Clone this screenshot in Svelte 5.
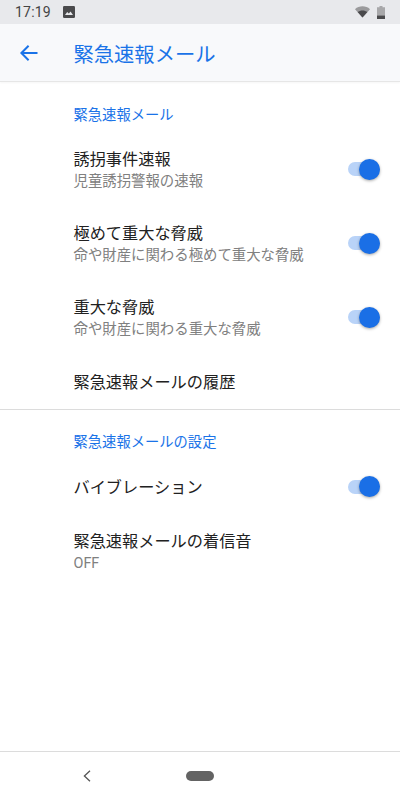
<script>
	const groups = [
		{
			title: '緊急速報メール',
			rows: [
				{ label: '誘拐事件速報', sub: '児童誘拐警報の速報', on: true },
				{ label: '極めて重大な脅威', sub: '命や財産に関わる極めて重大な脅威', on: true },
				{ label: '重大な脅威', sub: '命や財産に関わる重大な脅威', on: true },
				{ label: '緊急速報メールの履歴' }
			]
		},
		{
			title: '緊急速報メールの設定',
			rows: [
				{ label: 'バイブレーション', on: true },
				{ label: '緊急速報メールの着信音', sub: 'OFF' }
			]
		}
	];
</script>

<div class="screen">
	<div class="status">
		<span class="time">17:19</span>
		<svg class="photo" width="12" height="12" viewBox="0 0 12 12">
			<rect width="12" height="12" rx="1.2" fill="#4a4a4c" />
			<path d="M2 9 L4.2 6 L5.8 7.6 L7.6 5.4 L10 9 Z" fill="#e8e9ec" />
		</svg>
		<span class="spacer"></span>
		<svg class="wifi" width="15" height="12" viewBox="0 0 15 12">
			<path d="M0 3.2 C4 -0.6 11 -0.6 15 3.2 L7.5 11.6 Z" fill="#9a9a9c" />
			<path d="M2.6 6.1 C5.3 3.9 9.7 3.9 12.4 6.1 L7.5 11.6 Z" fill="#4a4a4c" />
		</svg>
		<svg class="battery" width="8" height="13" viewBox="0 0 8 13">
			<path d="M2.5 0 H5.5 V1.2 H8 V13 H0 V1.2 H2.5 Z" fill="#a8a8aa" />
			<rect y="9.6" width="8" height="3.4" fill="#4a4a4c" />
		</svg>
	</div>

	<header class="appbar">
		<svg class="back" width="20" height="20" viewBox="0 0 20 20">
			<path d="M18.5 10 H2.5 M9.6 2.8 L2.4 10 L9.6 17.2" fill="none" stroke="#1a73e8" stroke-width="2" />
		</svg>
		<h1>緊急速報メール</h1>
	</header>

	<main class="list">
		{#each groups as group, i}
			<section class:divided={i > 0}>
				<h2>{group.title}</h2>
				{#each group.rows as row}
					<div class="row" class:single={!row.sub}>
						<div class="text">
							<div class="label">{row.label}</div>
							{#if row.sub}
								<div class="sub">{row.sub}</div>
							{/if}
						</div>
						{#if row.on}
							<div class="switch"><span class="thumb"></span></div>
						{/if}
					</div>
				{/each}
			</section>
		{/each}
	</main>

	<nav class="navbar">
		<svg class="navback" width="8" height="12" viewBox="0 0 8 12">
			<path d="M7 0.8 L1.4 6 L7 11.2" fill="none" stroke="#555" stroke-width="1.3" />
		</svg>
		<span class="pill"></span>
	</nav>
</div>

<style>
	:global(body) {
		margin: 0;
		background: #fff;
	}

	.screen {
		width: 400px;
		height: 800px;
		display: flex;
		flex-direction: column;
		font-family: 'Roboto', 'Noto Sans CJK JP', sans-serif;
		overflow: hidden;
	}

	.status {
		height: 24px;
		background: #e8e9ec;
		display: flex;
		align-items: center;
		padding: 0 15px 0 15px;
		color: #444;
		font-size: 14px;
	}

	.time {
		letter-spacing: 0.2px;
	}

	.photo {
		margin-left: 12px;
	}

	.spacer {
		flex: 1;
	}

	.battery {
		margin-left: 7px;
	}

	.appbar {
		height: 57px;
		background: #f8f9fb;
		border-bottom: 1px solid #e6e6e6;
		display: flex;
		align-items: center;
		padding-left: 19px;
		box-shadow: 0 1px 2px rgba(0, 0, 0, 0.04);
	}

	.appbar h1 {
		margin: 0 0 0 34.5px;
		font-size: 20.3px;
		font-weight: 400;
		color: #1a73e8;
	}

	.list {
		flex: 1;
		padding-top: 23px;
	}

	section.divided {
		border-top: 1px solid #dcdcdc;
		padding-top: 22px;
	}

	h2 {
		margin: 0 0 7px 73.5px;
		font-size: 14.3px;
		line-height: 20px;
		font-weight: 400;
		color: #1a73e8;
	}

	.row {
		height: 74px;
		display: flex;
		align-items: center;
		padding: 0 20px 0 73.5px;
	}

	.row.single {
		height: 55px;
	}

	.text {
		flex: 1;
		margin-top: 2px;
	}

	.label {
		font-size: 16.2px;
		line-height: 22px;
		color: #212121;
	}

	.sub {
		font-size: 14.4px;
		line-height: 21px;
		color: #808080;
	}

	.switch {
		width: 32px;
		height: 14px;
		border-radius: 7px;
		background: #b9d3f8;
		position: relative;
	}

	.thumb {
		position: absolute;
		right: 0.5px;
		top: -3.5px;
		width: 21px;
		height: 21px;
		border-radius: 50%;
		background: #1a6fe6;
		box-shadow: 0 1px 3px rgba(0, 0, 0, 0.35);
	}

	.navbar {
		height: 48px;
		border-top: 1px solid #dcdcdc;
		display: flex;
		align-items: center;
		justify-content: center;
		position: relative;
	}

	.navback {
		position: absolute;
		left: 83px;
		top: 18px;
	}

	.pill {
		width: 28px;
		height: 10px;
		border-radius: 5px;
		background: #636363;
	}
</style>
